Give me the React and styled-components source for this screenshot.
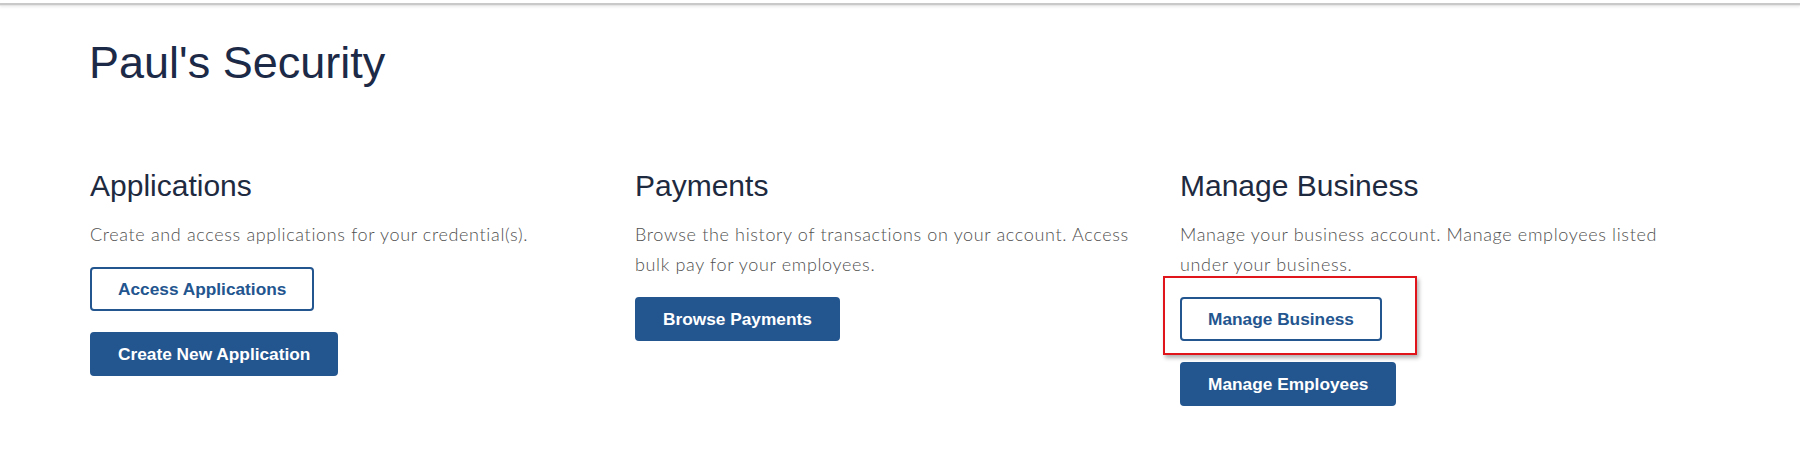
import React from 'react';
import styled, { createGlobalStyle } from 'styled-components';

const GlobalStyle = createGlobalStyle`
  body {
    margin: 0;
    background: #ffffff;
    font-family: "Liberation Sans", Arial, sans-serif;
  }
`;

const TopShade = styled.div`
  height: 6px;
  background: linear-gradient(#ffffff 0 3px, #c9c9c9 3px 5px, #e6e6e6 5px 6px);
  box-shadow: 0 1px 3px rgba(0, 0, 0, 0.08);
`;

const Main = styled.main`
  padding: 0 0 0 90px;
`;

const Title = styled.h1`
  margin: 30px 0 0 -1px;
  font-size: 45px;
  line-height: 54px;
  font-weight: 400;
  color: #1c2a47;
`;

const Columns = styled.div`
  display: grid;
  grid-template-columns: repeat(3, 545px);
  margin-top: 78px;
`;

const Column = styled.section`
  padding-right: 30px;
`;

const Heading = styled.h2`
  margin: 0;
  font-size: 30px;
  line-height: 36px;
  font-weight: 400;
  color: #1e2a40;
`;

const Description = styled.p`
  margin: 15px 0 18px;
  font-family: Lato, "Open Sans", sans-serif;
  font-weight: 300;
  font-size: 18px;
  letter-spacing: 0.65px;
  line-height: 30px;
  color: #505050;
`;

const Actions = styled.div`
  display: flex;
  flex-direction: column;
  align-items: flex-start;
  gap: 21px;
`;

const Button = styled.button`
  height: 44px;
  padding: 0 26px;
  border: 2px solid #23558f;
  border-radius: 4px;
  background: ${(p) => (p.$filled ? '#23558f' : '#ffffff')};
  color: ${(p) => (p.$filled ? '#ffffff' : '#23558f')};
  font-family: "Liberation Sans", Arial, sans-serif;
  font-weight: 700;
  font-size: 17.3px;
  cursor: pointer;
`;

const Highlighted = styled.div`
  position: relative;
`;

const Annotation = styled.div`
  position: absolute;
  top: -21px;
  left: -17.5px;
  right: -35px;
  bottom: -14px;
  border: 2px solid #e0141b;
  box-shadow: 2px 3px 4px rgba(0, 0, 0, 0.3);
  pointer-events: none;
`;

const sections = [
  {
    title: 'Applications',
    text: 'Create and access applications for your credential(s).',
    buttons: [
      { label: 'Access Applications' },
      { label: 'Create New Application', filled: true },
    ],
  },
  {
    title: 'Payments',
    text: 'Browse the history of transactions on your account. Access bulk pay for your employees.',
    buttons: [{ label: 'Browse Payments', filled: true }],
  },
  {
    title: 'Manage Business',
    text: 'Manage your business account. Manage employees listed under your business.',
    buttons: [
      { label: 'Manage Business', marked: true },
      { label: 'Manage Employees', filled: true },
    ],
  },
];

const App = () => {
  return (
    <>
      <GlobalStyle />
      <TopShade />
      <Main>
        <Title>Paul's Security</Title>
        <Columns>
          {sections.map((s) => (
            <Column key={s.title}>
              <Heading>{s.title}</Heading>
              <Description>{s.text}</Description>
              <Actions>
                {s.buttons.map((b) =>
                  b.marked ? (
                    <Highlighted key={b.label}>
                      <Button $filled={b.filled}>{b.label}</Button>
                      <Annotation />
                    </Highlighted>
                  ) : (
                    <Button key={b.label} $filled={b.filled}>
                      {b.label}
                    </Button>
                  )
                )}
              </Actions>
            </Column>
          ))}
        </Columns>
      </Main>
    </>
  );
};

export default App;
